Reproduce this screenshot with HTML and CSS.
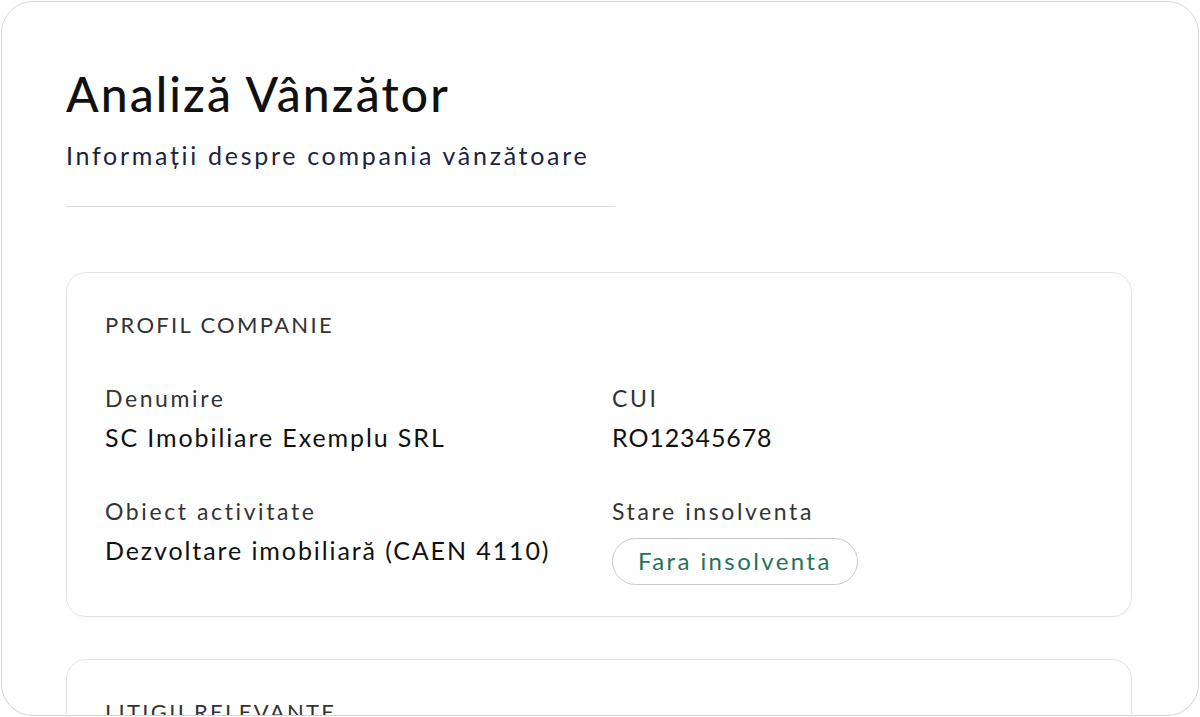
FILE: index.html
```html
<!DOCTYPE html>
<html lang="ro">
<head>
    <meta charset="UTF-8">
    <meta name="viewport" content="width=device-width, initial-scale=1.0">
    <title>Analiză Vânzător</title>
    <link rel="stylesheet" href="styles.css">
</head>
<body>
    <main class="panel">
        <header class="panel-head">
            <h1>Analiză Vânzător</h1>
            <p class="subtitle">Informații despre compania vânzătoare</p>
            <div class="divider"></div>
        </header>

        <section class="card">
            <h2 class="card-title">PROFIL COMPANIE</h2>
            <div class="fields">
                <div class="field">
                    <div class="field-label">Denumire</div>
                    <div class="field-value">SC Imobiliare Exemplu SRL</div>
                </div>
                <div class="field">
                    <div class="field-label">CUI</div>
                    <div class="field-value code">RO12345678</div>
                </div>
                <div class="field">
                    <div class="field-label">Obiect activitate</div>
                    <div class="field-value">Dezvoltare imobiliară (CAEN 4110)</div>
                </div>
                <div class="field">
                    <div class="field-label">Stare insolventa</div>
                    <span class="badge">Fara insolventa</span>
                </div>
            </div>
        </section>

        <section class="card">
            <h2 class="card-title">LITIGII RELEVANTE</h2>
        </section>
    </main>
</body>
</html>
```

FILE: styles.css
```css
body {
    font-family: Lato, "Open Sans", sans-serif;
    background-color: #ffffff;
    margin: 0;
    padding: 1px;
}

.panel {
    box-sizing: border-box;
    height: 715px;
    border: 1px solid #d6d6d6;
    border-radius: 32px;
    padding: 63px 66px 0 64px;
    overflow: hidden;
    background: #ffffff;
}

.panel-head {
    width: 549px;
}

h1 {
    margin: 0;
    font-size: 48px;
    line-height: 1.2;
    font-weight: 500;
    color: #111111;
    letter-spacing: 2.1px;
}

.subtitle {
    margin: 16px 0 0;
    font-size: 25px;
    line-height: 1.3;
    color: #1c2340;
    letter-spacing: 2.7px;
}

.divider {
    margin-top: 35px;
    height: 1px;
    background: #dddddd;
}

.card {
    margin-top: 65px;
    border: 1px solid #e3e3e3;
    border-radius: 20px;
    padding: 38px 38px 31px;
    box-shadow: 0 1px 3px rgba(0, 0, 0, 0.04);
}

.card + .card {
    margin-top: 42px;
}

.card-title {
    margin: 0;
    font-size: 22px;
    line-height: 1.3;
    font-weight: 400;
    color: #333333;
    letter-spacing: 2.3px;
}

.fields {
    display: grid;
    grid-template-columns: 481px 1fr;
    column-gap: 26px;
    row-gap: 44px;
    margin-top: 44px;
}

.field-label {
    font-size: 23px;
    line-height: 1.3;
    color: #333333;
    letter-spacing: 2.6px;
}

.field-value {
    margin-top: 7px;
    font-size: 25px;
    line-height: 1.3;
    color: #111111;
    letter-spacing: 1.9px;
}

.field-value.code {
    letter-spacing: 0.9px;
}

.badge {
    display: inline-block;
    margin-top: 11px;
    padding: 7px 25px 8px;
    border: 1px solid #c4ccc9;
    border-radius: 24px;
    font-size: 24px;
    line-height: 30px;
    color: #1d7557;
    letter-spacing: 2.4px;
}
```
